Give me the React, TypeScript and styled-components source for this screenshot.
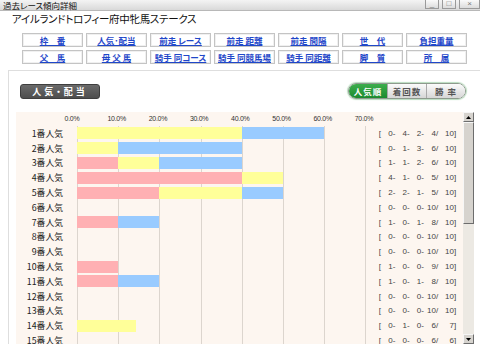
import React from "react";
import styled, { createGlobalStyle } from "styled-components";

const GlobalStyle = createGlobalStyle`
  html, body {
    margin: 0;
    padding: 0;
    background: #ffffff;
  }
  body {
    font-family: "Noto Sans CJK JP", "Noto Sans", sans-serif;
    font-feature-settings: "palt";
    overflow: hidden;
  }
`;

const Window = styled.div`
  width: 480px;
  height: 344px;
  overflow: hidden;
  display: flex;
  flex-direction: column;
  background: #ffffff;
`;

const TitleBar = styled.div`
  height: 10px;
  flex: none;
  display: flex;
  align-items: center;
  justify-content: space-between;
  padding-left: 3px;
  background: linear-gradient(#f4f4f4, #d9d9d9);
  border-bottom: 1px solid #b8b8b8;
  font-size: 8.5px;
  line-height: 10px;
  color: #111;
`;

const WinButtons = styled.div`
  display: flex;
  gap: 3px;
  height: 9px;
  align-self: flex-start;
`;

const WinButton = styled.div<{ $wide?: boolean }>`
  width: ${(p) => (p.$wide ? 19 : 12)}px;
  height: 8px;
  border: 1px solid #9a9a9a;
  border-top: none;
  background: linear-gradient(#fafafa, #dcdcdc);
  display: flex;
  align-items: center;
  justify-content: center;
  font-family: "Liberation Sans", sans-serif;
  font-size: 8px;
  color: #777;
  line-height: 8px;
`;

const RaceTitle = styled.div`
  padding: 1px 0 0 12px;
  height: 21px;
  font-size: 10.5px;
  letter-spacing: -0.3px;
  line-height: 14px;
  color: #111;
`;

const NavGrid = styled.div`
  margin-left: 22px;
  display: grid;
  grid-template-columns: repeat(7, 61px);
  grid-auto-rows: 14px;
  column-gap: 3px;
  row-gap: 3px;
`;

const NavCell = styled.div`
  border: 1px solid #c4c4c4;
  box-shadow: inset 0 0 0 1px #f0f0f0;
  background: #ffffff;
  display: flex;
  align-items: center;
  justify-content: center;
`;

const NavLink = styled.a`
  font-size: 8.5px;
  font-weight: 700;
  line-height: 10px;
  color: #1f47c9;
  text-decoration: underline;
  white-space: pre;
  cursor: pointer;
`;

const Panel = styled.div`
  margin: 6px 0 0 8px;
  flex: 1;
  min-height: 0;
  border-top: 1px solid #dedede;
  border-left: 1px solid #dedede;
  display: flex;
  flex-direction: column;
`;

const PanelHead = styled.div`
  display: flex;
  justify-content: space-between;
  align-items: center;
  padding: 13px 14px 0 11px;
  height: 14px;
  flex: none;
`;

const SectionLabel = styled.div`
  width: 78px;
  height: 13px;
  border: 1px solid #3e3e3e;
  border-radius: 3px;
  background: linear-gradient(#6a6a6a, #4e4e4e);
  color: #ffffff;
  font-size: 9px;
  font-weight: 700;
  letter-spacing: 3px;
  display: flex;
  align-items: center;
  justify-content: center;
`;

const SortGroup = styled.div`
  display: flex;
  height: 14px;
  border: 1px solid #8d9a8d;
  border-radius: 8px;
  overflow: hidden;
  box-shadow: 0 0 1px 1px #b9dcbf;
`;

const SortButton = styled.div<{ $active?: boolean }>`
  width: 38px;
  display: flex;
  align-items: center;
  justify-content: center;
  font-size: 8.5px;
  font-weight: 700;
  letter-spacing: 1px;
  color: ${(p) => (p.$active ? "#ffffff" : "#555555")};
  background: ${(p) =>
    p.$active
      ? "linear-gradient(#3cae4c, #1b8a2e)"
      : "linear-gradient(#fbfbfb, #d6d6d6)"};
  & + & {
    border-left: 1px solid #a9a9a9;
  }
`;

const ChartBox = styled.div`
  margin: 14px 6px 0 7px;
  flex: 1;
  min-height: 0;
  display: flex;
  background: #fdf6f0;
`;

const ChartBody = styled.div`
  flex: 1;
  overflow: hidden;
`;

const AxisRow = styled.div`
  height: 14px;
  display: flex;
`;

const AxisSpacer = styled.div`
  width: 61px;
  flex: none;
`;

const Ticks = styled.div`
  position: relative;
  width: 290px;
`;

const Tick = styled.span`
  position: absolute;
  top: 2px;
  transform: translateX(-50%);
  font-family: "Liberation Sans", sans-serif;
  font-size: 7px;
  letter-spacing: -0.3px;
  color: #333;
  line-height: 10px;
`;

const Row = styled.div`
  height: 14.8px;
  display: flex;
  align-items: stretch;
`;

const RowLabel = styled.div`
  width: 47px;
  flex: none;
  text-align: right;
  font-size: 8.8px;
  color: #222;
  display: flex;
  align-items: center;
  justify-content: flex-end;
  margin-right: 14px;
`;

const Track = styled.div`
  width: 290px;
  flex: none;
  display: flex;
  align-items: center;
  background: repeating-linear-gradient(
    to right,
    #dcd5ce 0px,
    #dcd5ce 1px,
    transparent 1px,
    transparent 41.2px
  );
`;

const Bar = styled.div<{ $kind: "win" | "second" | "third" }>`
  height: 12px;
  background: ${(p) =>
    p.$kind === "win" ? "#ffb0b3" : p.$kind === "second" ? "#ffff99" : "#99cbff"};
`;

const Record = styled.div`
  margin-left: 11px;
  display: flex;
  align-items: center;
  font-family: "Liberation Sans", sans-serif;
  font-size: 8px;
  color: #444;
`;

const RecCell = styled.span<{ $w: number }>`
  width: ${(p) => p.$w}px;
  text-align: right;
  white-space: pre;
`;

const ScrollBar = styled.div`
  width: 11px;
  flex: none;
  display: flex;
  flex-direction: column;
  background: #ece9e3;
`;

const ScrollArrow = styled.div`
  height: 10px;
  flex: none;
  box-sizing: border-box;
  background: #d6d3ce;
  border: 1px solid;
  border-color: #f6f6f6 #6d6d6d #6d6d6d #f6f6f6;
  display: flex;
  align-items: center;
  justify-content: center;
`;

const Thumb = styled.div`
  height: 102px;
  flex: none;
  box-sizing: border-box;
  background: #d6d3ce;
  border: 1px solid;
  border-color: #f6f6f6 #6d6d6d #6d6d6d #f6f6f6;
`;

const ScrollTrack = styled.div`
  flex: 1;
`;

const Arrow = ({ down }: { down?: boolean }) => (
  <svg width="5" height="3" viewBox="0 0 5 3">
    <polygon points={down ? "0,0 5,0 2.5,3" : "0,3 5,3 2.5,0"} fill="#000" />
  </svg>
);

const navItems = [
  "枠　番",
  "人気･配当",
  "前走 レース",
  "前走 距離",
  "前走 間隔",
  "世　代",
  "負担重量",
  "父　馬",
  "母 父 馬",
  "騎手 同コース",
  "騎手 同競馬場",
  "騎手 同距離",
  "脚　質",
  "所　属",
];

// [1着, 2着, 3着, 着外, 出走]
const records = [
  [0, 4, 2, 4, 10],
  [0, 1, 3, 6, 10],
  [1, 1, 2, 6, 10],
  [4, 1, 0, 5, 10],
  [2, 2, 1, 5, 10],
  [0, 0, 0, 10, 10],
  [1, 0, 1, 8, 10],
  [0, 0, 0, 10, 10],
  [0, 0, 0, 10, 10],
  [1, 0, 0, 9, 10],
  [1, 0, 1, 8, 10],
  [0, 0, 0, 10, 10],
  [0, 0, 0, 10, 10],
  [0, 1, 0, 6, 7],
  [0, 0, 0, 6, 6],
  [0, 0, 0, 4, 4],
  [0, 0, 0, 2, 2],
  [0, 0, 0, 1, 1],
];

const PX_PER_PCT = 4.12;

function App() {
  return (
    <Window>
      <GlobalStyle />
      <TitleBar>
        <span>過去レース傾向詳細</span>
        <WinButtons>
          <WinButton>_</WinButton>
          <WinButton>□</WinButton>
          <WinButton $wide>×</WinButton>
        </WinButtons>
      </TitleBar>
      <RaceTitle>アイルランドトロフィー府中牝馬ステークス</RaceTitle>
      <NavGrid>
        {navItems.map((n) => (
          <NavCell key={n}>
            <NavLink>{n}</NavLink>
          </NavCell>
        ))}
      </NavGrid>
      <Panel>
        <PanelHead>
          <SectionLabel>人気・配当</SectionLabel>
          <SortGroup>
            <SortButton $active>人気順</SortButton>
            <SortButton>着回数</SortButton>
            <SortButton>勝 率</SortButton>
          </SortGroup>
        </PanelHead>
        <ChartBox>
          <ChartBody>
            <AxisRow>
              <AxisSpacer />
              <Ticks>
                {[0, 10, 20, 30, 40, 50, 60, 70].map((t, i) => (
                  <Tick key={t} style={{ left: i === 0 ? -5 : t * PX_PER_PCT - 1.5 }}>
                    {t.toFixed(1)}%
                  </Tick>
                ))}
              </Ticks>
            </AxisRow>
            {records.map((r, i) => {
              const [a, b, c, d, n] = r;
              const w = (v: number) => (v / n) * 100 * PX_PER_PCT;
              return (
                <Row key={i}>
                  <RowLabel>{i + 1}番人気</RowLabel>
                  <Track>
                    {a > 0 && <Bar $kind="win" style={{ width: w(a) }} />}
                    {b > 0 && <Bar $kind="second" style={{ width: w(b) }} />}
                    {c > 0 && <Bar $kind="third" style={{ width: w(c) }} />}
                  </Track>
                  <Record>
                    <RecCell $w={3}>[</RecCell>
                    <RecCell $w={14.3}>{a}-</RecCell>
                    <RecCell $w={14.3}>{b}-</RecCell>
                    <RecCell $w={14.3}>{c}-</RecCell>
                    <RecCell $w={14.3}>{d}/</RecCell>
                    <RecCell $w={18}>{n}]</RecCell>
                  </Record>
                </Row>
              );
            })}
          </ChartBody>
          <ScrollBar>
            <ScrollArrow>
              <Arrow />
            </ScrollArrow>
            <Thumb />
            <ScrollTrack />
            <ScrollArrow>
              <Arrow down />
            </ScrollArrow>
          </ScrollBar>
        </ChartBox>
      </Panel>
    </Window>
  );
}

export default App;
